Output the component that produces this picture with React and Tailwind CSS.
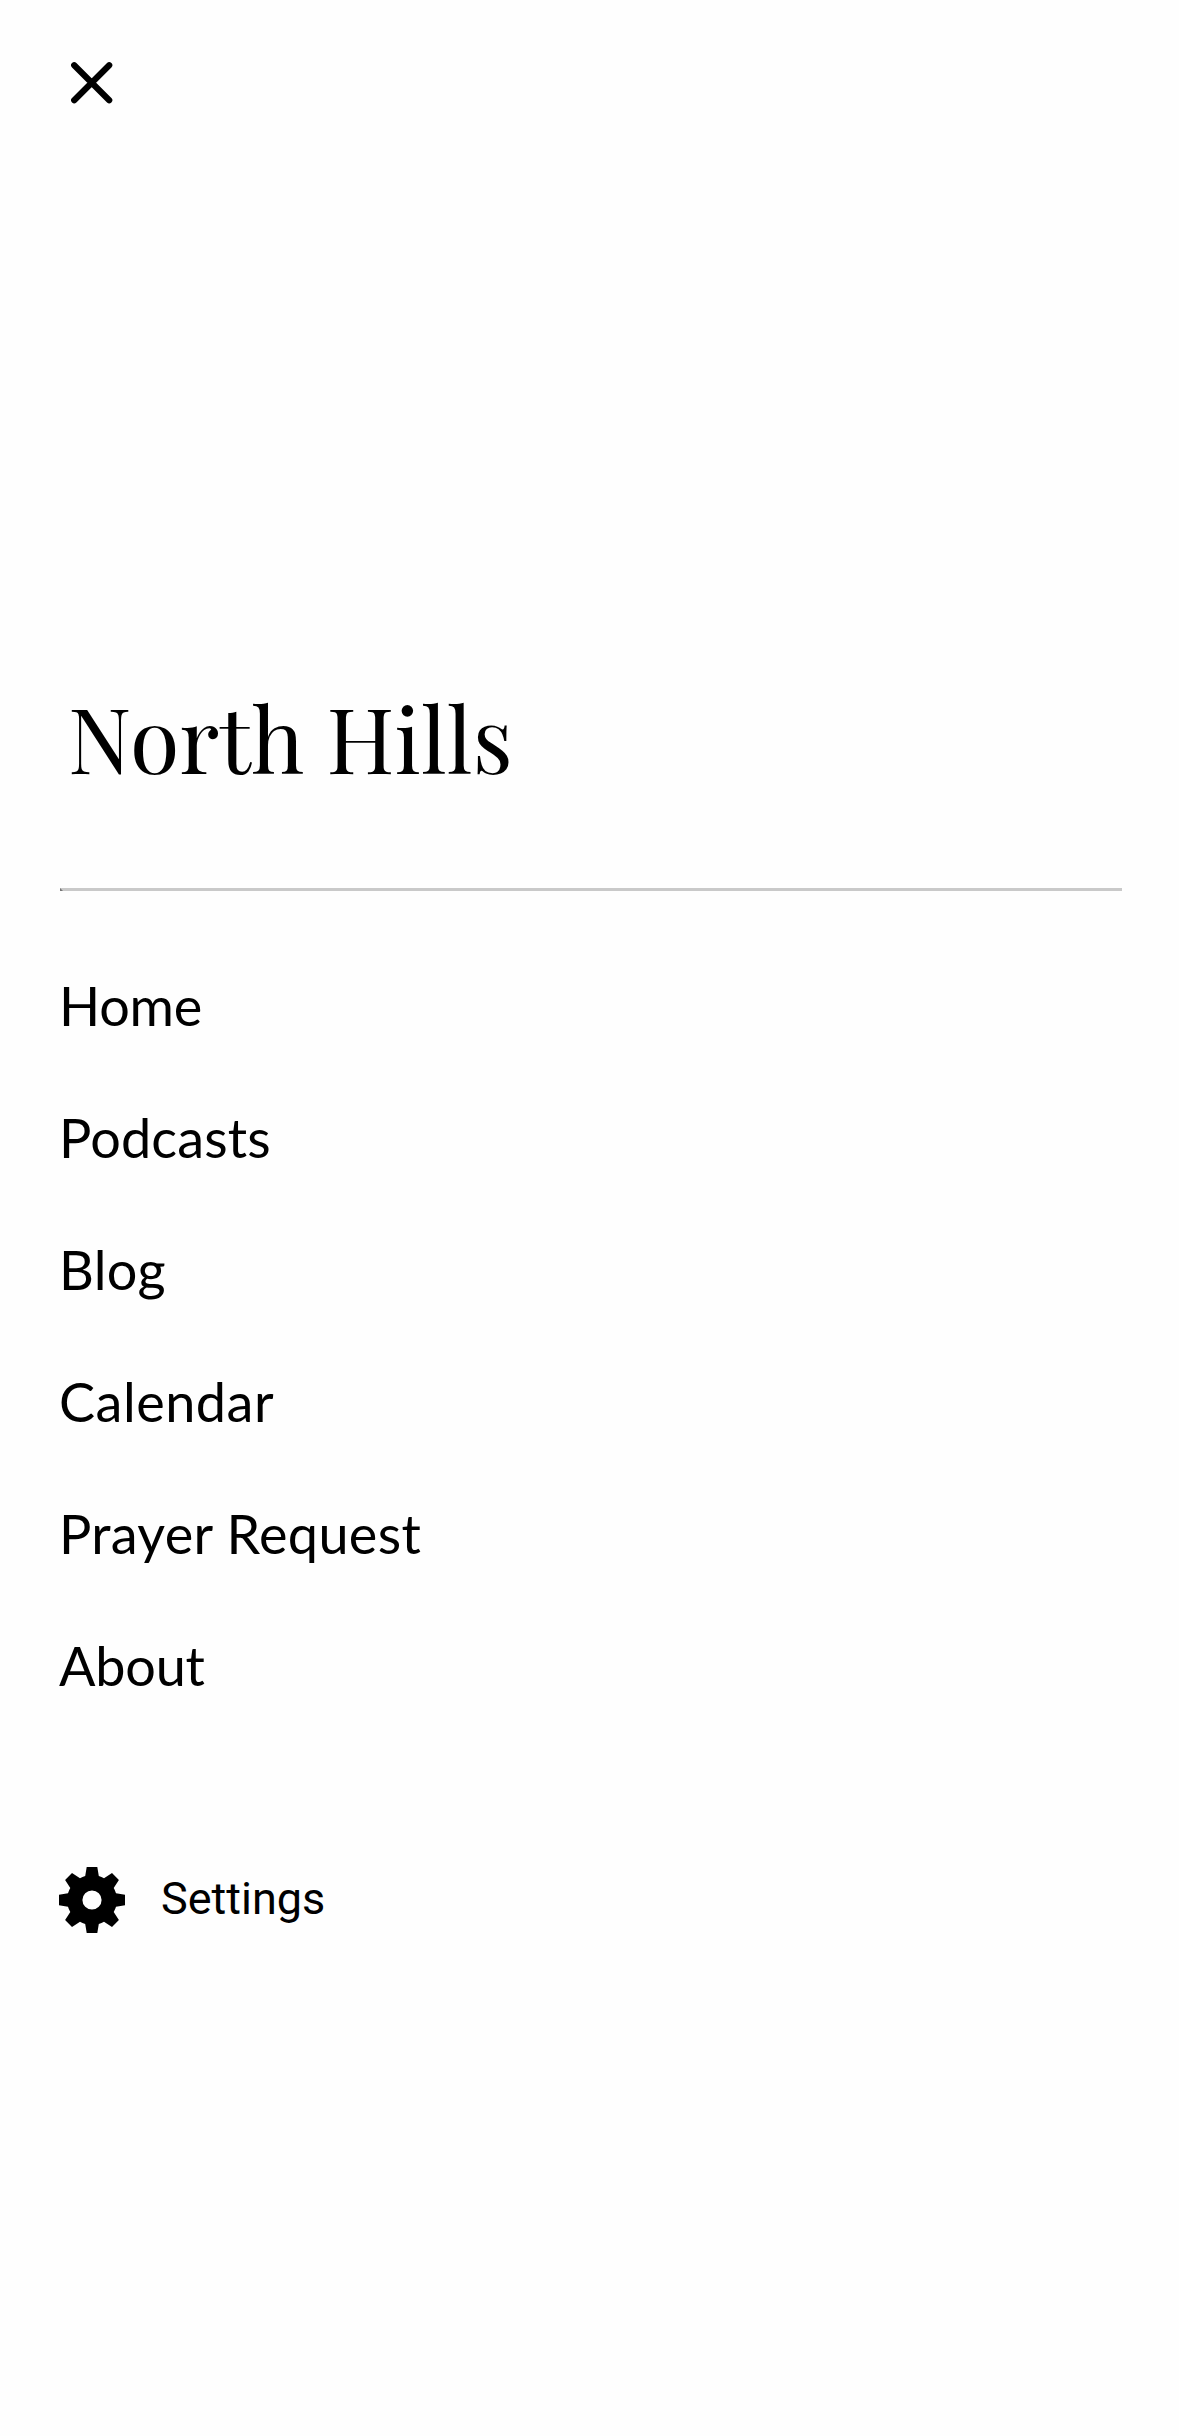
const items = [
  { label: 'Home', tracking: 'tracking-[-0.25px]' },
  { label: 'Podcasts', tracking: 'tracking-[0.15px]' },
  { label: 'Blog', tracking: 'tracking-[0.3px]' },
  { label: 'Calendar', tracking: 'tracking-[0.5px]' },
  { label: 'Prayer Request', tracking: 'tracking-[0.33px]' },
  { label: 'About', tracking: 'tracking-[-0.2px]' },
];

function CloseIcon() {
  return (
    <svg viewBox="0 0 44 44" className="size-full" stroke="currentColor" strokeWidth="6.2" strokeLinecap="round">
      <path d="M4.2 5.2 39.2 40.2M39.2 5.2 4.2 40.2" />
    </svg>
  );
}

function GearIcon() {
  return (
    <svg viewBox="0 0 66 66" className="size-[66px] shrink-0" fill="currentColor">
      <path
        fillRule="evenodd"
        d="M27.7 0H38.3L39.8 9Q42.6 9.8 45 11.3L53 6.1 59.9 13 54.7 21Q56.2 23.4 57 26.2L66 27.7V38.3L57 39.8Q56.2 42.6 54.7 45L59.9 53 53 59.9 45 54.7Q42.6 56.2 39.8 57L38.3 66H27.7L26.2 57Q23.4 56.2 21 54.7L13 59.9 6.1 53 11.3 45Q9.8 42.6 9 39.8L0 38.3V27.7L9 26.2Q9.8 23.4 11.3 21L6.1 13 13 6.1 21 11.3Q23.4 9.8 26.2 9ZM33 23.4A9.6 9.6 0 1 0 33 42.6 9.6 9.6 0 1 0 33 23.4Z"
      />
    </svg>
  );
}

export default function App() {
  return (
    <div className="flex h-[2436px] w-[1179px] flex-col bg-[#fefefe] text-black">
      <button aria-label="Close" className="mt-[60px] ml-[70px] size-[44px]">
        <CloseIcon />
      </button>
      <h1 className="mt-[567px] ml-[68px] h-[132px] w-max font-['Playfair_Display','Liberation_Serif',serif] text-[90px] leading-[132px] whitespace-nowrap">
        North Hills
      </h1>
      <hr className="mt-[85px] mr-[57px] ml-[60px] h-[3px] border-t-[3px] border-l-[3px] border-t-[#c9c9c9] border-l-[#767676]" />
      <nav className="mt-[49px] ml-[59px] flex flex-col font-['Lato',sans-serif] text-[54px] leading-[132px]">
        {items.map(({ label, tracking }) => (
          <a key={label} className={`h-[132px] w-max ${tracking}`}>
            {label}
          </a>
        ))}
      </nav>
      <a className="mt-[135px] ml-[59px] flex h-[66px] items-start gap-[36px]">
        <GearIcon />
        <span className="font-['Roboto',sans-serif] text-[45px] leading-[63px]">Settings</span>
      </a>
    </div>
  );
}
